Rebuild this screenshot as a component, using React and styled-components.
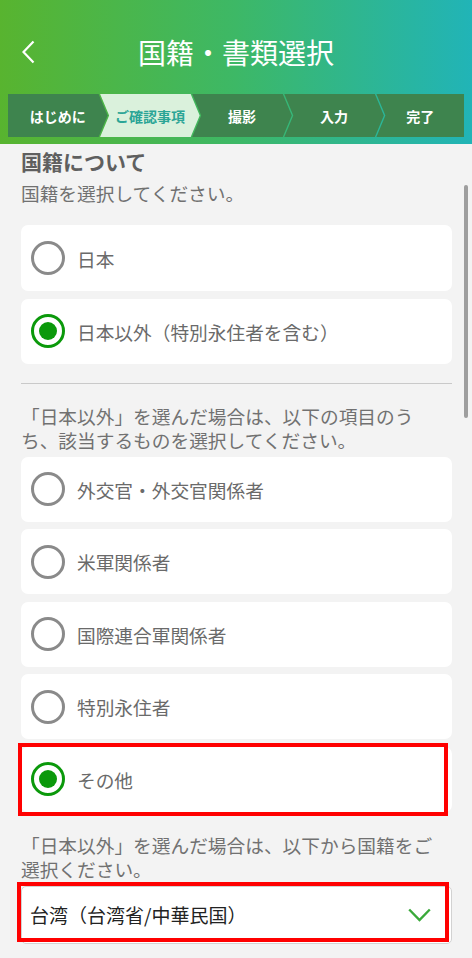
import React from 'react';
import styled, { createGlobalStyle } from 'styled-components';

const GlobalStyle = createGlobalStyle`
  * { box-sizing: border-box; }
  body {
    margin: 0;
    background: #f3f3f3;
    font-family: "Noto Sans CJK JP", "Noto Sans", sans-serif;
  }
`;

const Page = styled.div`
  position: relative;
  width: 472px;
  height: 958px;
  overflow: hidden;
  background: #f3f3f3;
`;

const Header = styled.header`
  background: linear-gradient(90deg, #58b42f 0%, #3db866 50%, #21b4b7 100%);
  padding: 10px 8px 7px;
`;

const TitleBar = styled.div`
  display: grid;
  grid-template-columns: 60px 1fr 60px;
  align-items: center;
  height: 84px;
`;

const BackButton = styled.button`
  background: none;
  border: 0;
  padding: 0 0 0 14px;
  display: flex;
  align-items: center;
  cursor: pointer;
`;

const Title = styled.h1`
  margin: 0;
  text-align: center;
  color: #fff;
  font-size: 28px;
  font-weight: 400;
`;

const Stepper = styled.ol`
  display: flex;
  height: 43px;
  margin: 0;
  padding: 0;
  list-style: none;
`;

const Step = styled.li`
  flex: ${p => (p.$last ? 0.88 : 1)} 1 0;
  margin-left: ${p => (p.$first ? 0 : '-7.5px')};
  display: flex;
  align-items: center;
  justify-content: center;
  background: ${p => (p.$active ? '#daf1dc' : '#3e844e')};
  color: ${p => (p.$active ? '#2ba596' : '#fff')};
  font-size: 14px;
  font-weight: 700;
  clip-path: ${p =>
    p.$first
      ? 'polygon(0 0, calc(100% - 9px) 0, 100% 50%, calc(100% - 9px) 100%, 0 100%)'
      : p.$last
      ? 'polygon(0 0, 100% 0, 100% 100%, 0 100%, 9px 50%)'
      : 'polygon(0 0, calc(100% - 9px) 0, 100% 50%, calc(100% - 9px) 100%, 0 100%, 9px 50%)'};
`;

const Content = styled.main`
  padding: 4px 20px 0 21px;
`;

const Heading = styled.h2`
  margin: 0;
  font-size: 21px;
  line-height: 27px;
  font-weight: 700;
  color: #5f5f5f;
`;

const Note = styled.p`
  margin: ${p => p.$margin || '0'};
  padding-right: 10px;
  font-size: 18.7px;
  line-height: 24px;
  color: #717171;
`;

const OptionList = styled.div`
  display: flex;
  flex-direction: column;
  gap: 7.5px;
`;

const Option = styled.label`
  position: relative;
  display: flex;
  align-items: center;
  gap: 12px;
  height: ${p => p.$height || 65}px;
  padding-left: 10px;
  background: #fff;
  border-radius: 7px;
  font-size: 18.7px;
  color: #6a6a6a;
  cursor: pointer;
`;

const Radio = styled.span`
  flex: none;
  width: 34px;
  height: 34px;
  border-radius: 50%;
  border: 3.5px solid ${p => (p.$checked ? '#0b990b' : '#8a8a8a')};
  display: flex;
  align-items: center;
  justify-content: center;

  &::after {
    content: '';
    display: ${p => (p.$checked ? 'block' : 'none')};
    width: 18px;
    height: 18px;
    border-radius: 50%;
    background: #0b990b;
  }
`;

const Divider = styled.hr`
  margin: 19px 0 0;
  border: 0;
  border-top: 1px solid #c9c9c9;
`;

const Highlight = styled.div`
  position: relative;

  &::after {
    content: '';
    position: absolute;
    top: ${p => p.$top}px;
    left: ${p => p.$left}px;
    right: ${p => p.$right}px;
    bottom: ${p => p.$bottom}px;
    border: 4px solid #ff0000;
    pointer-events: none;
  }
`;

const Select = styled.div`
  display: flex;
  align-items: center;
  justify-content: space-between;
  height: 58px;
  padding: 0 20px 0 8px;
  background: #fff;
  border: 1px solid #d2d2d2;
  border-radius: 5px;
  font-size: 19px;
  color: #222;
`;

const ScrollThumb = styled.div`
  position: absolute;
  top: 185px;
  left: 464px;
  width: 4px;
  height: 233px;
  border-radius: 2px;
  background: #9e9e9e;
`;

const steps = ['はじめに', 'ご確認事項', '撮影', '入力', '完了'];

const categories = [
  { label: '外交官・外交官関係者' },
  { label: '米軍関係者' },
  { label: '国際連合軍関係者' },
  { label: '特別永住者' },
];

const ChevronLeft = () => (
  <svg width="13" height="24" viewBox="0 0 13 24">
    <polyline points="11.5,1.5 1.5,12 11.5,22.5" fill="none" stroke="#fff" strokeWidth="2.2" />
  </svg>
);

const ChevronDown = () => (
  <svg width="23" height="14" viewBox="0 0 23 14">
    <polyline points="1.2,1.5 11.5,12 21.8,1.5" fill="none" stroke="#3aa93a" strokeWidth="2.4" />
  </svg>
);

const App = () => {
  return (
    <Page>
      <GlobalStyle />
      <Header>
        <TitleBar>
          <BackButton aria-label="戻る">
            <ChevronLeft />
          </BackButton>
          <Title>国籍・書類選択</Title>
          <span />
        </TitleBar>
        <Stepper>
          {steps.map((s, i) => (
            <Step key={s} $first={i === 0} $last={i === steps.length - 1} $active={i === 1}>
              {s}
            </Step>
          ))}
        </Stepper>
      </Header>

      <Content>
        <Heading>国籍について</Heading>
        <Note $margin="6px 0 20px">国籍を選択してください。</Note>
        <OptionList>
          <Option $height={66}>
            <Radio />
            日本
          </Option>
          <Option>
            <Radio $checked />
            日本以外（特別永住者を含む）
          </Option>
        </OptionList>

        <Divider />
        <Note $margin="20px 0 5px">
          「日本以外」を選んだ場合は、以下の項目のうち、該当するものを選択してください。
        </Note>
        <OptionList>
          {categories.map(c => (
            <Option key={c.label}>
              <Radio />
              {c.label}
            </Option>
          ))}
          <Highlight $top={-4} $left={-3} $right={4} $bottom={-4}>
            <Option>
              <Radio $checked />
              その他
            </Option>
          </Highlight>
        </OptionList>

        <Note $margin="21px 0 5px">
          「日本以外」を選んだ場合は、以下から国籍をご選択ください。
        </Note>
        <Highlight $top={-4} $left={-4} $right={3} $bottom={2}>
          <Select>
            <span>台湾（台湾省/中華民国）</span>
            <ChevronDown />
          </Select>
        </Highlight>
      </Content>
      <ScrollThumb />
    </Page>
  );
};

export default App;
